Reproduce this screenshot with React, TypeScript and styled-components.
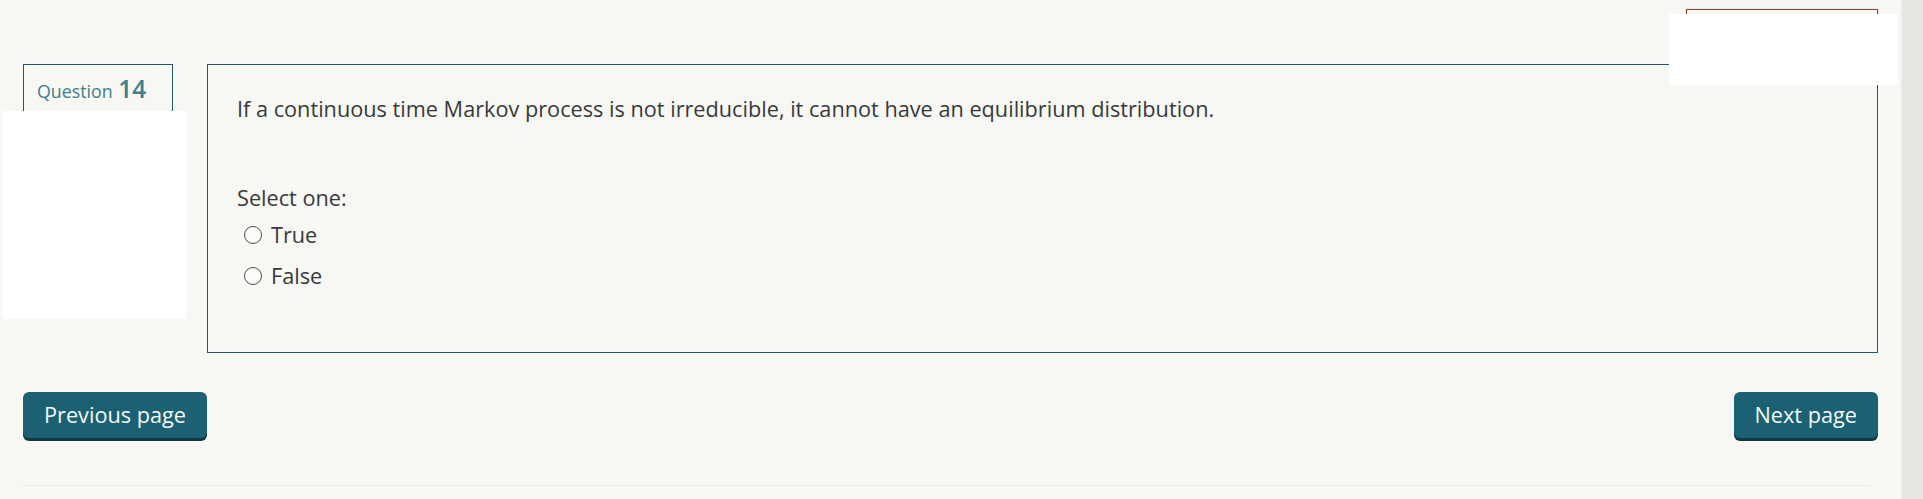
import styled, { createGlobalStyle } from 'styled-components';

const GlobalStyle = createGlobalStyle`
  html, body {
    margin: 0;
    padding: 0;
    background: #f7f7f3;
  }
  body {
    font-family: 'Open Sans', 'Noto Sans', sans-serif;
    color: #373a3c;
    overflow: hidden;
  }
`;

const Shell = styled.div`
  display: flex;
  width: 1923px;
  height: 499px;
`;

const Page = styled.main`
  position: relative;
  flex: 1;
  padding: 0 23px;
  display: flex;
  flex-direction: column;
`;

const ScrollTrack = styled.div`
  width: 21px;
  background: #e7e7e1;
  border-left: 1px solid #efefea;
`;

const TopBar = styled.div`
  height: 64px;
  display: flex;
  justify-content: flex-end;
  align-items: flex-start;
`;

const TimerBox = styled.div`
  position: relative;
  margin-top: 9px;
  width: 192px;
  height: 72px;
  border: 1px solid #7d4a3c;
  box-shadow: 0 0 2px rgba(220, 120, 110, 0.4);
  box-sizing: border-box;
`;

const Redaction = styled.div<{ $top: number; $left: number; $w: number; $h: number }>`
  position: absolute;
  top: ${({ $top }) => $top}px;
  left: ${({ $left }) => $left}px;
  width: ${({ $w }) => $w}px;
  height: ${({ $h }) => $h}px;
  background: #ffffff;
  z-index: 5;
`;

const Row = styled.div`
  display: flex;
  gap: 34px;
  align-items: flex-start;
`;

const InfoBox = styled.div`
  position: relative;
  width: 150px;
  height: 250px;
  box-sizing: border-box;
  border: 1px solid #1f5866;
  padding: 8px 13px;
`;

const QuestionLabel = styled.h3`
  margin: 0;
  font-size: 17.8px;
  font-weight: 400;
  color: #3b808e;
  line-height: 32px;
  white-space: nowrap;
`;

const QuestionNo = styled.span`
  font-size: 24.4px;
  font-weight: 600;
  margin-left: 1px;
`;

const Content = styled.div`
  flex: 1;
  height: 289px;
  box-sizing: border-box;
  border: 1px solid #1f5866;
  padding: 28px 29px;
  font-size: 21.7px;
  line-height: 32px;
`;

const QText = styled.p`
  margin: 0 0 57px;
`;

const Prompt = styled.div`
  margin-bottom: 5px;
`;

const Option = styled.label`
  display: flex;
  align-items: center;
  gap: 9px;
  padding-left: 7px;
  height: 32px;
  margin-bottom: 9px;
`;

const Radio = styled.span`
  flex: none;
  width: 18px;
  height: 18px;
  box-sizing: border-box;
  border: 1px solid #4f4f4f;
  border-radius: 50%;
  background: #fbfbfb;
`;

const NavRow = styled.div`
  display: flex;
  justify-content: space-between;
  margin-top: 39px;
`;

const NavButton = styled.button`
  height: 46px;
  padding: 0 21px;
  border: none;
  border-radius: 6px;
  background: #1b6173;
  box-shadow: 0 3px 0 #0f3a44;
  color: #f4fafa;
  font-family: 'Open Sans', 'Noto Sans', sans-serif;
  font-size: 21.7px;
  line-height: 46px;
  cursor: pointer;
`;

const Footer = styled.div`
  margin-top: 47px;
  height: 1px;
  margin-right: 7px;
  background: #ebebe5;
`;

export default function App() {
  return (
    <>
      <GlobalStyle />
      <Shell>
        <Page>
          <TopBar>
            <TimerBox>
              <Redaction $top={4} $left={-18} $w={229} $h={71} />
            </TimerBox>
          </TopBar>
          <Row>
            <InfoBox>
              <QuestionLabel>
                Question <QuestionNo>14</QuestionNo>
              </QuestionLabel>
              <Redaction $top={46} $left={-21} $w={183} $h={208} />
            </InfoBox>
            <Content>
              <QText>
                If a continuous time Markov process is not irreducible, it cannot
                have an equilibrium distribution.
              </QText>
              <Prompt>Select one:</Prompt>
              <Option>
                <Radio />
                True
              </Option>
              <Option>
                <Radio />
                False
              </Option>
            </Content>
          </Row>
          <NavRow>
            <NavButton>Previous page</NavButton>
            <NavButton>Next page</NavButton>
          </NavRow>
          <Footer />
        </Page>
        <ScrollTrack />
      </Shell>
    </>
  );
}
